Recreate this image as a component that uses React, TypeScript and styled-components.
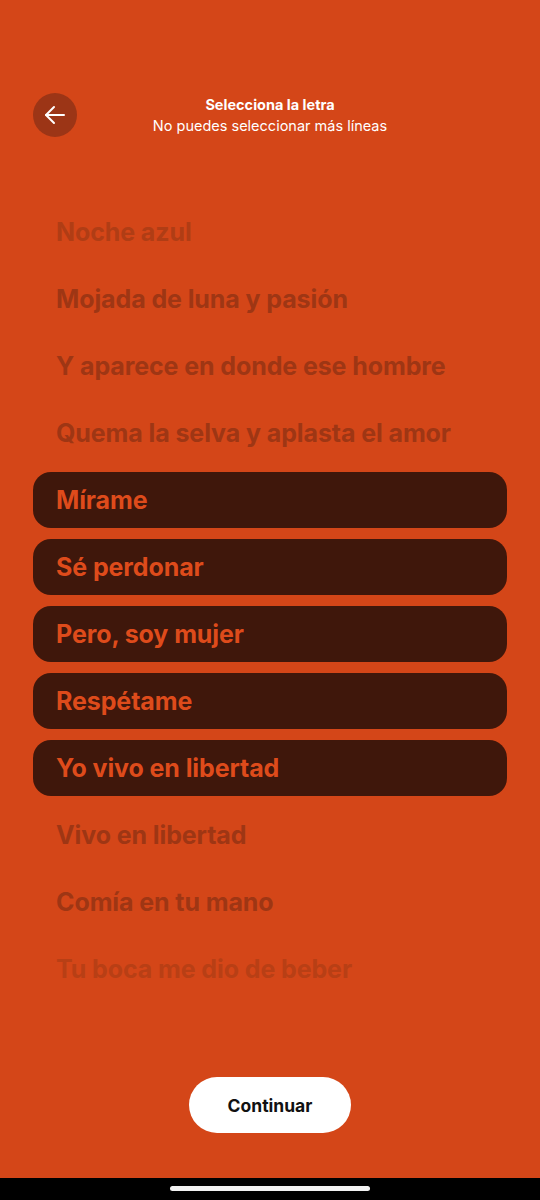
import { createGlobalStyle, styled } from 'styled-components'

const GlobalStyle = createGlobalStyle`
	html, body {
		margin: 0;
		padding: 0;
		background: #d44618;
	}
	body {
		font-family: Inter, "Noto Sans", "Liberation Sans", sans-serif;
	}
`

const Screen = styled.div`
	width: 540px;
	height: 1200px;
	background: #d44618;
	display: flex;
	flex-direction: column;
	overflow: hidden;
`
const Header = styled.div`
	display: grid;
	grid-template-columns: 44px 1fr 44px;
	align-items: center;
	padding: 93px 33px 0;
	height: 44px;
`
const BackButton = styled.button`
	width: 44px;
	height: 44px;
	border-radius: 50%;
	border: none;
	padding: 0;
	background: #9c3516;
	display: flex;
	align-items: center;
	justify-content: center;
`
const HeaderText = styled.div`
	display: flex;
	flex-direction: column;
	align-items: center;
	color: #fff;
	font-size: 14.5px;
	line-height: 21px;
	margin-top: -1px;
`
const Title = styled.div`
	font-weight: 700;
`
const Subtitle = styled.div`
	font-weight: 400;
`
const Lyrics = styled.div`
	display: flex;
	flex-direction: column;
	gap: 11px;
	padding: 67px 33px 0;
`
const Line = styled.div<{ $selected?: boolean; $tone: string }>`
	height: 56px;
	border-radius: 18px;
	padding: 0 23px;
	display: flex;
	align-items: center;
	font-size: 25px;
	font-weight: 700;
	letter-spacing: -0.1px;
	background: ${p => (p.$selected ? '#3f170b' : 'transparent')};
	color: ${p => (p.$selected ? '#de4b1b' : p.$tone)};
`
const Footer = styled.div`
	margin-top: auto;
	display: flex;
	justify-content: center;
	padding-bottom: 45px;
`
const ContinueButton = styled.button`
	width: 162px;
	height: 56px;
	border-radius: 28px;
	border: none;
	background: #fff;
	color: #111;
	font-family: Inter, "Noto Sans", sans-serif;
	font-size: 17.5px;
	font-weight: 700;
`
const NavBar = styled.div`
	height: 22px;
	background: #000;
	display: flex;
	justify-content: center;
	padding-top: 8px;
	box-sizing: border-box;
`
const HomeIndicator = styled.div`
	width: 200px;
	height: 5px;
	border-radius: 3px;
	background: #f2f2f2;
`

const lines = [
	{ text: 'Noche azul', tone: '#b03d15' },
	{ text: 'Mojada de luna y pasión', tone: '#9e3614' },
	{ text: 'Y aparece en donde ese hombre', tone: '#9e3614' },
	{ text: 'Quema la selva y aplasta el amor', tone: '#9e3614' },
	{ text: 'Mírame', tone: '', selected: true },
	{ text: 'Sé perdonar', tone: '', selected: true },
	{ text: 'Pero, soy mujer', tone: '', selected: true },
	{ text: 'Respétame', tone: '', selected: true },
	{ text: 'Yo vivo en libertad', tone: '', selected: true },
	{ text: 'Vivo en libertad', tone: '#9e3614' },
	{ text: 'Comía en tu mano', tone: '#9e3614' },
	{ text: 'Tu boca me dio de beber', tone: '#b83f15' },
]

export default function App() {
	return (
		<Screen>
			<GlobalStyle />
			<Header>
				<BackButton aria-label="Atrás">
					<svg width="24" height="24" viewBox="0 0 24 24" fill="none" stroke="#fff" strokeWidth="2" strokeLinecap="round" strokeLinejoin="round">
						<path d="M21 12H3" />
						<path d="M11 4l-8 8 8 8" />
					</svg>
				</BackButton>
				<HeaderText>
					<Title>Selecciona la letra</Title>
					<Subtitle>No puedes seleccionar más líneas</Subtitle>
				</HeaderText>
				<div />
			</Header>
			<Lyrics>
				{lines.map(l => (
					<Line key={l.text} $selected={l.selected} $tone={l.tone}>
						{l.text}
					</Line>
				))}
			</Lyrics>
			<Footer>
				<ContinueButton>Continuar</ContinueButton>
			</Footer>
			<NavBar>
				<HomeIndicator />
			</NavBar>
		</Screen>
	)
}
